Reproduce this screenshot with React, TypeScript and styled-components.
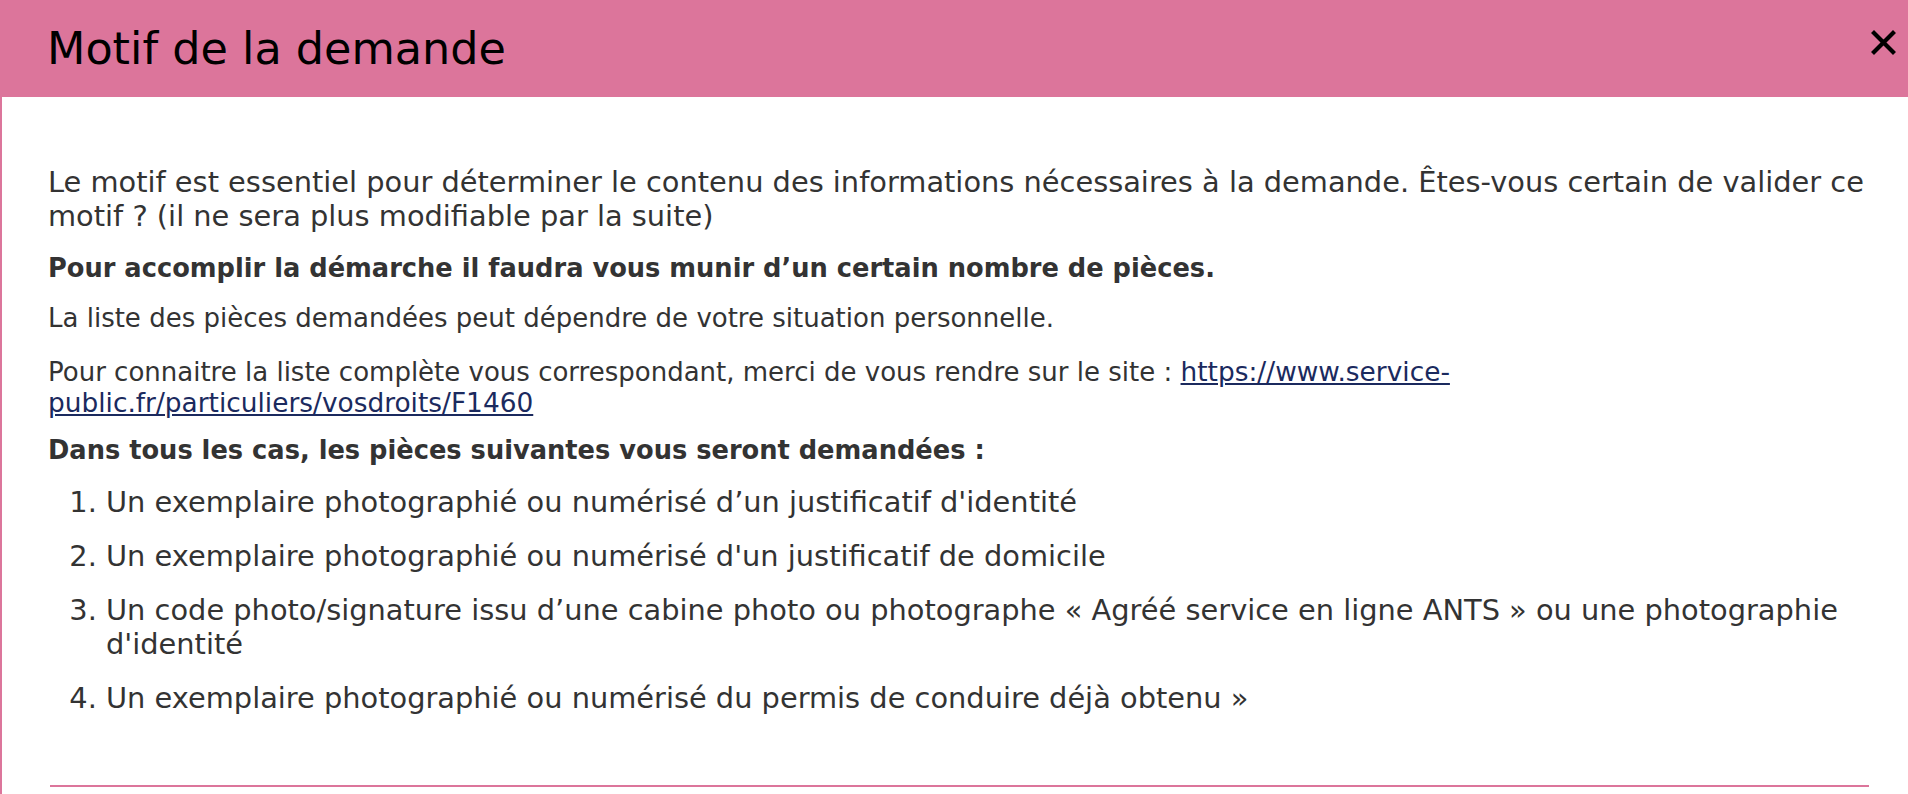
import styled, { createGlobalStyle } from "styled-components";

const GlobalStyle = createGlobalStyle`
  html, body {
    margin: 0;
    padding: 0;
    background: #ffffff;
  }
  body {
    font-family: "DejaVu Sans", Verdana, sans-serif;
  }
`;

const pink = "#dc759b";

const StyledModal = styled.div`
  width: 1908px;
  height: 794px;
  overflow: hidden;
  background: #ffffff;
`;
const StyledHeader = styled.header`
  display: flex;
  align-items: center;
  justify-content: space-between;
  height: 97px;
  padding: 0 12px 0 47px;
  box-sizing: border-box;
  background-color: ${pink};
`;
const StyledTitle = styled.h2`
  margin: 0;
  font-size: 44.5px;
  font-weight: normal;
  line-height: normal;
  color: #000000;
`;
const StyledClose = styled.button`
  display: flex;
  align-items: center;
  justify-content: center;
  align-self: flex-start;
  margin-top: 30px;
  width: 25px;
  height: 25px;
  padding: 0;
  border: none;
  background: transparent;
  cursor: pointer;
`;
const StyledBody = styled.div`
  border-left: 2px solid ${pink};
  padding: 68px 39px 0 46px;
  height: 697px;
  box-sizing: border-box;
  color: #333333;
`;
const StyledText = styled.p<{ $large?: boolean; $bold?: boolean }>`
  margin: 0 0 20px;
  font-size: ${(p) => (p.$large ? "28.85px" : p.$bold ? "25.7px" : "26px")};
  font-weight: ${(p) => (p.$bold ? "bold" : "normal")};
  line-height: normal;
`;
const StyledLinkText = styled(StyledText)`
  margin-top: 23px;
  margin-bottom: 17px;
`;
const StyledLink = styled.a`
  color: #1b2a5e;
  font-size: 26.4px;
  text-decoration: underline;
`;
const StyledList = styled.ol`
  margin: 0;
  padding-left: 58px;
  font-size: 28.85px;
  line-height: normal;
`;
const StyledItem = styled.li`
  margin-bottom: 20px;
`;
const StyledDivider = styled.hr`
  margin: 70px 0 0 2px;
  border: none;
  height: 2px;
  background-color: ${pink};
`;

const items = [
  "Un exemplaire photographié ou numérisé d’un justificatif d'identité",
  "Un exemplaire photographié ou numérisé d'un justificatif de domicile",
  "Un code photo/signature issu d’une cabine photo ou photographe «\u00a0Agréé service en ligne ANTS\u00a0» ou une photographie d'identité",
  "Un exemplaire photographié ou numérisé du permis de conduire déjà obtenu\u00a0»",
];

export default function App() {
  return (
    <StyledModal>
      <GlobalStyle />
      <StyledHeader>
        <StyledTitle>Motif de la demande</StyledTitle>
        <StyledClose aria-label="Fermer">
          <svg width="25" height="25" viewBox="0 0 25 25">
            <path
              d="M3 3 L22 22 M22 3 L3 22"
              stroke="#000000"
              strokeWidth="4.2"
              strokeLinecap="square"
            />
          </svg>
        </StyledClose>
      </StyledHeader>
      <StyledBody>
        <StyledText $large>
          Le motif est essentiel pour déterminer le contenu des informations
          nécessaires à la demande. Êtes-vous certain de valider ce motif ? (il
          ne sera plus modifiable par la suite)
        </StyledText>
        <StyledText $bold>
          Pour accomplir la démarche il faudra vous munir d’un certain nombre
          de pièces.
        </StyledText>
        <StyledText>
          La liste des pièces demandées peut dépendre de votre situation
          personnelle.
        </StyledText>
        <StyledLinkText>
          Pour connaitre la liste complète vous correspondant, merci de vous
          rendre sur le site :{" "}
          <StyledLink href="#">
            https://www.service-public.fr/particuliers/vosdroits/F1460
          </StyledLink>
        </StyledLinkText>
        <StyledText $bold>
          Dans tous les cas, les pièces suivantes vous seront demandées :
        </StyledText>
        <StyledList>
          {items.map((item) => (
            <StyledItem key={item}>{item}</StyledItem>
          ))}
        </StyledList>
        <StyledDivider />
      </StyledBody>
    </StyledModal>
  );
}
